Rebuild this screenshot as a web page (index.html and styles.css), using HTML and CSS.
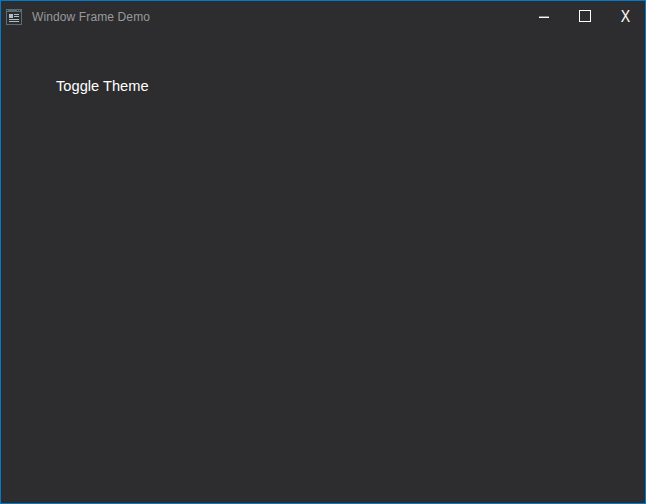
FILE: index.html
```html
<!DOCTYPE html>
<html lang="en">
<head>
<meta charset="utf-8">
<title>Window Frame Demo</title>
<link rel="stylesheet" href="styles.css">
</head>
<body>
<div class="window">
  <header class="titlebar">
    <svg class="app-icon" width="16" height="16" viewBox="0 0 16 16" shape-rendering="crispEdges">
      <path d="M.5.5h15v15H.5z" fill="none" stroke="#546e7a"/>
      <path d="M2 1h9v1H2zM12 1h1v1h-1zM14 1h1v1h-1zM1 2h14v1H1z" fill="#546e7a"/>
      <path d="M3 5h4v4H3zM8 5h5v1H8zM8 7h5v1H8zM3 10h10v1H3zM3 12h10v1H3z" fill="#b0bec5"/>
    </svg>
    <span class="title">Window Frame Demo</span>
    <div class="controls">
      <button class="control" aria-label="Minimize"><svg width="12" height="12" shape-rendering="crispEdges"><path d="M1 6h10v1H1z" fill="#858586"/><path d="M1 7h10v1H1z" fill="#fff"/></svg></button>
      <button class="control" aria-label="Maximize"><svg width="12" height="12" shape-rendering="crispEdges"><path d="M.5.5h11v11H.5z" fill="none" stroke="#fff"/></svg></button>
      <button class="control"><span class="close">X</span></button>
    </div>
  </header>
  <main class="content"><button class="toggle">Toggle Theme</button></main>
</div>
</body>
</html>
```
FILE: styles.css
```css
* { box-sizing: border-box; }
body { margin: 0; font-family: "Liberation Sans", Arial, sans-serif; }
button { padding: 0; border: 0; background: none; font: inherit; color: #fff; }
.window { height: 100vh; border: 1px solid #007acc; background: #2d2d30; }
.titlebar { display: flex; align-items: center; height: 32px; padding-left: 5px; }
.app-icon { flex: none; }
.title { margin-left: 10px; font-size: 12px; line-height: 16px; letter-spacing: 0.12px; color: #999; }
.controls { display: flex; align-self: flex-start; height: 30px; margin: 0 -1px 0 auto; }
.control { display: flex; align-items: center; justify-content: center; width: 41px; font-size: 16px; }
.close { padding-top: 1px; transform: scaleX(0.88); }
.content { padding: 44px 55px; }
.toggle { display: block; font-size: 14.67px; line-height: 18px; }
```
